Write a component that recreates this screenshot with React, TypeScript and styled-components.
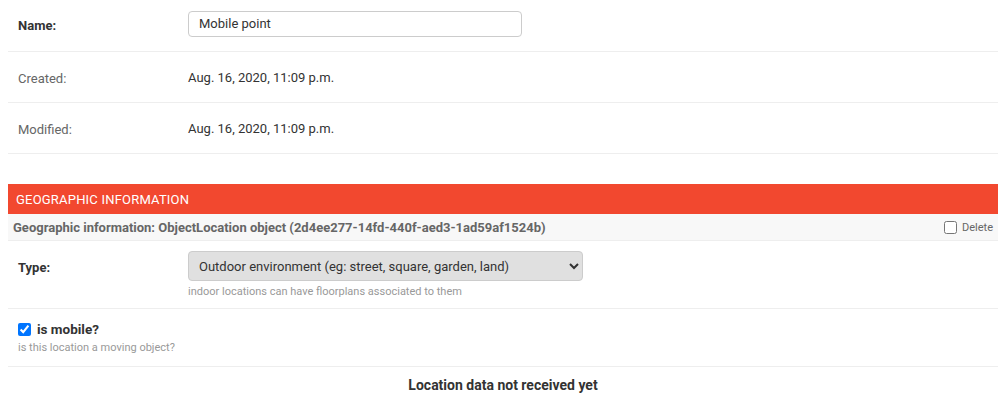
import React from "react";
import styled, { createGlobalStyle } from "styled-components";

const Global = createGlobalStyle`
  html, body { margin: 0; padding: 0; background: #fff; }
  body { margin: 0 9px 0 8px; font-family: Roboto, "Liberation Sans", sans-serif; font-size: 13px; color: #333; }
  * { box-sizing: border-box; }
`;

const Page = styled.div`
  display: flex;
  flex-direction: column;
`;

const FormRow = styled.div<{ $h: number }>`
  display: flex;
  align-items: center;
  height: ${(p) => p.$h}px;
  padding: 0 10px;
  border-bottom: 1px solid #eee;
`;

const Label = styled.div<{ $required?: boolean }>`
  width: 170px;
  flex: none;
  font-size: 13px;
  color: ${(p) => (p.$required ? "#333" : "#666")};
  font-weight: ${(p) => (p.$required ? 700 : 400)};
  padding-top: ${(p) => (p.$required ? "0" : "2px")};
`;

const Value = styled.div`
  font-size: 13px;
  color: #333;
`;

const TextInput = styled.input`
  width: 334px;
  height: 26px;
  margin-bottom: 4px;
  border: 1px solid #ccc;
  border-radius: 4px;
  padding: 2px 10px;
  font-family: Roboto, "Liberation Sans", sans-serif;
  font-size: 13px;
  color: #333;
  outline: none;
`;

const Module = styled.div`
  margin-top: 30px;
  display: flex;
  flex-direction: column;
`;

const ModuleHeader = styled.h2`
  margin: 0;
  height: 30px;
  display: flex;
  align-items: center;
  padding: 0 8px;
  background: #f2482f;
  color: #fff;
  font-size: 13px;
  font-weight: 400;
  text-transform: uppercase;
  letter-spacing: 0.2px;
`;

const InlineHeader = styled.div`
  height: 27px;
  display: flex;
  align-items: center;
  justify-content: space-between;
  padding: 0 5px 0 5px;
  background: #f8f8f8;
  border-bottom: 1px solid #eee;
  color: #666;
  font-size: 13px;
  font-weight: 700;
`;

const DeleteBox = styled.label`
  display: flex;
  align-items: center;
  gap: 5px;
  font-weight: 400;
  font-size: 11px;
  color: #666;
  input { margin: 0; width: 13px; height: 13px; }
`;

const TypeRow = styled.div`
  display: flex;
  padding: 10px 10px 0;
  height: 68px;
  border-bottom: 1px solid #eee;
`;

const TypeLabel = styled.div`
  width: 170px;
  flex: none;
  font-weight: 700;
  padding-top: 9px;
  color: #333;
`;

const FieldCol = styled.div`
  display: flex;
  flex-direction: column;
`;

const Select = styled.select`
  width: 395px;
  height: 30px;
  background: #e0e0e0;
  border: 1px solid #ccc;
  border-radius: 4px;
  padding: 0 6px;
  font-family: Roboto, "Liberation Sans", sans-serif;
  font-size: 13px;
  color: #333;
`;

const Help = styled.div`
  font-size: 11px;
  color: #999;
  padding-top: 4px;
`;

const MobileRow = styled.div`
  display: flex;
  flex-direction: column;
  padding: 12px 10px 0;
  height: 58px;
  border-bottom: 1px solid #eee;
`;

const CheckLine = styled.label`
  display: flex;
  align-items: center;
  gap: 6px;
  font-weight: 700;
  font-size: 13.5px;
  color: #333;
  input { margin: 0; width: 13px; height: 13px; }
`;

const Notice = styled.div`
  text-align: center;
  font-weight: 700;
  font-size: 14px;
  color: #333;
  padding-top: 10px;
`;

export default function App() {
  return (
    <Page>
      <Global />
      <FormRow $h={52}>
        <Label $required>Name:</Label>
        <TextInput defaultValue="Mobile point" />
      </FormRow>
      <FormRow $h={51}>
        <Label>Created:</Label>
        <Value>Aug. 16, 2020, 11:09 p.m.</Value>
      </FormRow>
      <FormRow $h={51}>
        <Label>Modified:</Label>
        <Value>Aug. 16, 2020, 11:09 p.m.</Value>
      </FormRow>
      <Module>
        <ModuleHeader>Geographic information</ModuleHeader>
        <InlineHeader>
          <span>Geographic information: ObjectLocation object (2d4ee277-14fd-440f-aed3-1ad59af1524b)</span>
          <DeleteBox>
            <input type="checkbox" />
            Delete
          </DeleteBox>
        </InlineHeader>
        <TypeRow>
          <TypeLabel>Type:</TypeLabel>
          <FieldCol>
            <Select defaultValue="outdoor">
              <option value="outdoor">Outdoor environment (eg: street, square, garden, land)</option>
              <option value="indoor">Indoor environment (eg: building, roofs, subway, cars)</option>
            </Select>
            <Help>indoor locations can have floorplans associated to them</Help>
          </FieldCol>
        </TypeRow>
        <MobileRow>
          <CheckLine>
            <input type="checkbox" defaultChecked />
            is mobile?
          </CheckLine>
          <Help>is this location a moving object?</Help>
        </MobileRow>
        <Notice>Location data not received yet</Notice>
      </Module>
    </Page>
  );
}
